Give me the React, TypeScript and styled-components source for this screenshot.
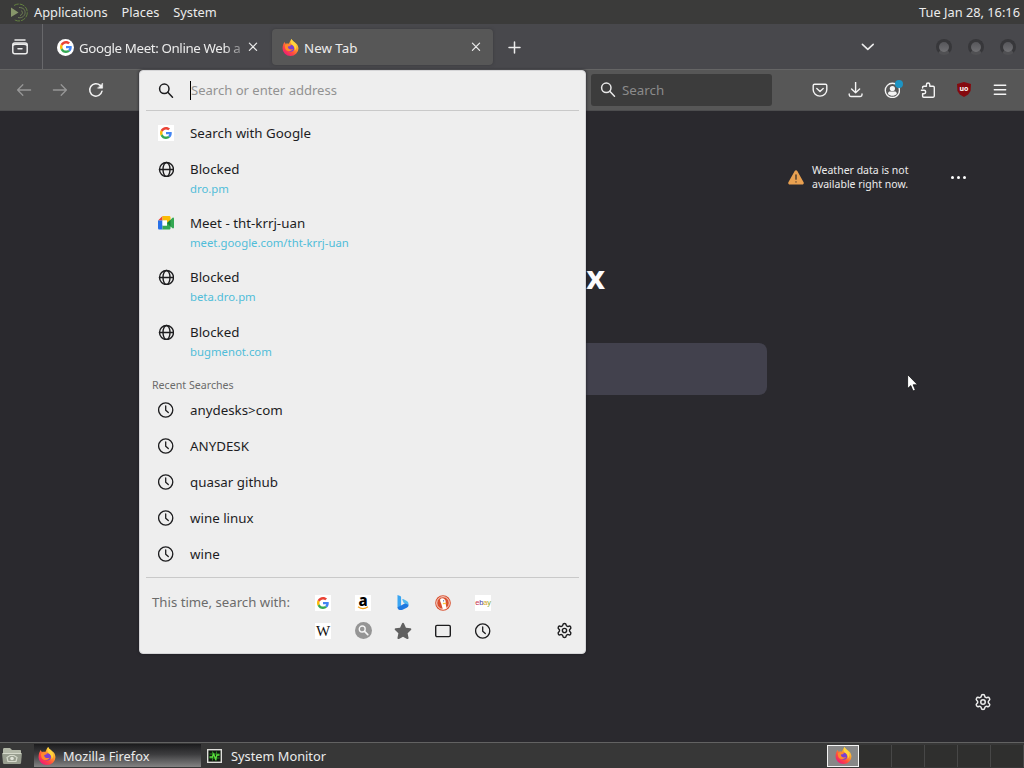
import React, { ReactNode } from "react"
import styled, { createGlobalStyle, css } from "styled-components"
import { Settings } from "lucide-react"

type IconProps = {
  size?: number
}

type TabProps = {
  $active?: boolean
  $width: number
}

type ResultProps = {
  icon: ReactNode
  title: string
  url?: string
}

const GlobalStyle = createGlobalStyle`
  * {
    box-sizing: border-box;
  }

  body {
    margin: 0;
    overflow: hidden;
    background: #2a292e;
    font-family: "Noto Sans", "Open Sans", sans-serif;
    font-size: 13.33px;
    line-height: 18px;
  }

  svg {
    display: block;
    flex: none;
  }
`

/* ---------- icons ---------- */

const Stroke = styled.svg.attrs<{ $w?: number }>({
  viewBox: "0 0 16 16",
  fill: "none",
  stroke: "currentColor",
  strokeLinecap: "round",
  strokeLinejoin: "round",
})`
  width: 16px;
  height: 16px;
  stroke-width: ${(props) => props.$w || 1.3};
`

const SearchIcon = () => (
  <Stroke $w={1.5}>
    <circle cx="6.3" cy="5.8" r="4.7" />
    <path d="M9.8 9.3l4.7 4.9" />
  </Stroke>
)

const GlobeIcon = () => (
  <Stroke $w={1.4}>
    <circle cx="8.5" cy="8.5" r="7" />
    <ellipse cx="8.5" cy="8.5" rx="3.5" ry="7" />
    <path d="M1.5 8.5h14" />
  </Stroke>
)

const ClockIcon = () => (
  <Stroke>
    <circle cx="7.7" cy="8" r="7.1" />
    <path d="M7.7 4v4.2l2.6 2.4" />
  </Stroke>
)

const ViewIcon = () => (
  <Stroke $w={1.5}>
    <path d="M3 1h10" />
    <rect x="0.8" y="4" width="14.4" height="10.8" rx="2" />
    <path d="M1 6.2C2 5.4 3 5.2 4 5.2h8c1 0 2 .2 3 1M6 9.7h4" />
  </Stroke>
)

const CloseIcon = () => (
  <Stroke $w={1.2}>
    <path d="M4.4 4.2l7.2 7.2M11.6 4.2l-7.2 7.2" />
  </Stroke>
)

const PlusIcon = () => (
  <Stroke $w={1.5}>
    <path d="M7.5 3v11M2 8.500h11" />
  </Stroke>
)

const ChevronIcon = () => (
  <Stroke $w={1.6}>
    <path d="M3.4 5.4l5.400 5 5.400-5" />
  </Stroke>
)

const BackIcon = () => (
  <Stroke>
    <path d="M14.6 8H1.6M6.8 2.8L1.6 8l5.2 5.2" />
  </Stroke>
)

const ForwardIcon = () => (
  <Stroke>
    <path d="M1.4 8h13M9.2 2.8L14.4 8l-5.2 5.2" />
  </Stroke>
)

const ReloadIcon = () => (
  <Stroke $w={1.5}>
    <path d="M14 9.2A6.2 6.2 0 1 1 12.2 3.4" />
    <path d="M14.6 1.4v4.8H9.8z" fill="currentColor" strokeWidth="0.6" />
  </Stroke>
)

const PocketIcon = () => (
  <Stroke $w={1.4}>
    <path d="M2.6 2.2h10.8c.9 0 1.4.5 1.4 1.4v4.2a6.8 6.3 0 0 1-13.6 0V3.6c0-.9.5-1.4 1.4-1.4z" />
    <path d="M4.8 6.4L8 9.4l3.2-3" />
  </Stroke>
)

const DownloadIcon = () => (
  <Stroke $w={1.4}>
    <path d="M7.600 .3v10.400M3.600 7L7.600 10.800l4-3.800M1.200 11.900v.9c0 1.100.6 1.700 1.700 1.700h9.400c1.100 0 1.700-.6 1.700-1.700v-.9" />
  </Stroke>
)

const AccountIcon = () => (
  <Stroke $w={1.4}>
    <circle cx="8.400" cy="8.400" r="7.100" />
    <circle cx="8.400" cy="6.500" r="2.600" fill="currentColor" stroke="none" />
    <path d="M4 12c0-1.800 1-2.400 2.200-2.400h4.400c1.200 0 2.200.6 2.200 2.400-2.400 2.400-6.400 2.400-8.800 0z" fill="currentColor" stroke="none" />
  </Stroke>
)

const PuzzleIcon = () => (
  <Stroke $w={1.4}>
    <path d="M2.600 6V5.400c0-.7.400-1.100 1.100-1.100h2.700V2.700a1.700 1.700 0 0 1 3.400 0v1.600h3.400c.7 0 1.100.4 1.100 1.100v8.700c0 .7-.4 1.100-1.100 1.100H3.700c-.7 0-1.100-.4-1.100-1.100v-2.400h1.400a1.700 1.700 0 0 0 0-3.400H1.400" />
  </Stroke>
)

const MenuIcon = () => (
  <Stroke $w={1.4}>
    <path d="M2.300 3.200h11.400M2.300 7.700h11.400M2.300 12.200h11.400" />
  </Stroke>
)

const WindowIcon = () => (
  <Stroke $w={1.4}>
    <rect x="0.7" y="2.400" width="14.600" height="11.200" rx="1.300" />
  </Stroke>
)

const StarIcon = () => (
  <svg width="18" height="18" viewBox="0 0 16 16" fill="#606060">
    <path d="M8 .6c.4 0 .7.3.9.7l1.7 3.7 4 .5c.8.1 1.1 1 .5 1.6l-3 2.8.8 4.1c.2.8-.6 1.4-1.3 1L8 13l-3.6 2c-.7.4-1.5-.2-1.3-1l.8-4.1-3-2.8C.3 6.500.6 5.600 1.400 5.500l4-.5L7.100 1.300c.2-.4.5-.7.9-.7z" />
  </svg>
)

const GoogleIcon = ({ size = 12 }: IconProps) => (
  <svg width={size} height={size} viewBox="0 0 48 48">
    <path fill="#EA4335" d="M24 9.500c3.540 0 6.710 1.220 9.210 3.600l6.850-6.850C35.900 2.380 30.470 0 24 0 14.620 0 6.510 5.380 2.560 13.220l7.980 6.190C12.430 13.720 17.740 9.500 24 9.500z" />
    <path fill="#4285F4" d="M46.980 24.550c0-1.570-.15-3.090-.38-4.550H24v9.020h12.940c-.58 2.960-2.260 5.480-4.780 7.180l7.730 6c4.510-4.180 7.090-10.360 7.090-17.650z" />
    <path fill="#FBBC05" d="M10.530 28.590c-.48-1.450-.76-2.990-.76-4.590s.27-3.140.76-4.590l-7.980-6.190C.92 16.460 0 20.120 0 24c0 3.880.92 7.540 2.560 10.780l7.970-6.190z" />
    <path fill="#34A853" d="M24 48c6.480 0 11.930-2.130 15.890-5.810l-7.730-6c-2.150 1.450-4.920 2.300-8.160 2.300-6.260 0-11.570-4.220-13.470-9.910l-7.980 6.190C6.510 42.620 14.620 48 24 48z" />
  </svg>
)

const FirefoxIcon = ({ size = 17 }: IconProps) => (
  <svg width={size} height={size} viewBox="0 0 32 32">
    <defs>
      <linearGradient id="fx-body" x1="0.85" y1="0.1" x2="0.2" y2="0.95">
        <stop offset="0" stopColor="#ffe04a" />
        <stop offset="0.35" stopColor="#ff9a2a" />
        <stop offset="0.65" stopColor="#ff4f3d" />
        <stop offset="1" stopColor="#f01878" />
      </linearGradient>
    </defs>
    <path
      fill="url(#fx-body)"
      d="M18 0c1 4 6 5 9 9 2 1 4 6 4 9a15 14 0 0 1-30 0C1 12 3 8 5 5c0 2 1 3 2 4 2-1 4-1 6 0 2-4 3-7 5-9z"
    />
    <circle cx="16.500" cy="17.500" r="6.500" fill="#7b3fd0" />
    <path fill="#ff8a2b" d="M5 12c4-3 9-2 12 0-2 1-4 2-6 2 0 5 5 7 10 5-4 6-13 5-15-1z" />
    <path fill="#ffd43c" d="M18 0c1 4 6 5 8 10 2 4 1 9-2 12 1-6-2-9-5-11-3-3-3-8-1-11z" />
  </svg>
)

const MeetIcon = () => (
  <svg width="16" height="14" viewBox="0 0 16 14">
    <path fill="#ea4335" d="M0 4.500L4.500 0v4.500z" />
    <path fill="#fbbc04" d="M4.500 0H11c1 0 1.500.5 1.500 1.500V5L9 7V4.500H4.500z" />
    <path fill="#2670e8" d="M0 4.500h4.500v9H1.500C.5 13.500 0 13 0 12z" />
    <path fill="#34a853" d="M4.500 9.500H9V7l5.600-5.200c.6-.4 1.400-.1 1.400.6v9.200c0 .7-.8 1-1.400.6L12.500 10.500V12c0 1-.5 1.500-1.500 1.500H4.500z" />
    <path fill="#188038" d="M9 7l3.500-3v6.500z" />
    <path fill="#ffffff" d="M4.500 4.500H9v5H4.500z" />
  </svg>
)

const BingIcon = () => (
  <svg width="12" height="15" viewBox="0 0 12 15">
    <path fill="#3aa5f2" d="M.5 0l2.700 1c.6.2.9.6.9 1.200v9L.5 12.800z" />
    <path fill="#1f78e0" d="M.5 12.200l3.600-1.700L8.500 8l3 1.500c.2 1.600-.6 2.600-1.800 3.300L5 15c-2.500.6-4.500-.8-4.500-2.800z" />
    <path fill="#52b9f0" d="M5.200 4.600c0-.5.400-.7.900-.5l3.300 1.600c1.600.8 2.300 2.100 2.100 4.100L6.600 7.800z" />
  </svg>
)

const DuckIcon = () => (
  <svg width="16" height="16" viewBox="0 0 16 16">
    <circle cx="8" cy="8" r="7.800" fill="#d9502f" />
    <circle cx="8" cy="8" r="6.300" fill="none" stroke="#ffffff" strokeWidth="0.8" />
    <path fill="#ffffff" d="M5.200 4.200C6 3 8.500 3 9.800 4.400c1 1 1 2.600.8 4l1 5.200c-1.200.6-2.600.8-3.800.6L6.200 8.400C5.400 7 4.900 5.200 5.200 4.200z" />
    <path fill="#f8c33a" d="M7.800 7.800l3.600.3-.4 1-3 .2z" />
    <circle cx="8.600" cy="5.800" r="0.600" fill="#2d4f8e" />
  </svg>
)

const GreySearchIcon = () => (
  <svg width="17" height="17" viewBox="0 0 16 16" fill="none" stroke="#f4f4f4" strokeLinecap="round">
    <circle cx="8" cy="8" r="8" fill="#959595" stroke="none" />
    <circle cx="6.800" cy="6.600" r="2.800" strokeWidth="1.300" />
    <path d="M9 8.900l3 3" strokeWidth="1.600" />
  </svg>
)

const WarningIcon = () => (
  <svg width="16" height="15" viewBox="0 0 16 15">
    <path fill="#e9a050" d="M6.700.9c.6-1 2-1 2.600 0l6.300 11.400c.6 1-.1 2.300-1.300 2.300H1.700c-1.200 0-1.900-1.300-1.300-2.300z" />
    <path stroke="#39302a" strokeWidth="1.300" strokeLinecap="round" d="M8 4.800v4.400M8 11.800v.1" />
  </svg>
)

const MateIcon = () => (
  <svg width="19" height="19" viewBox="0 0 19 19" fill="none">
    <path fill="#87966a" d="M1 4.500l7.500 5L1 14z" />
    <path stroke="#62803f" d="M4 2.500a8.500 8.500 0 1 1 0 14" strokeDasharray="5 1" />
    <path stroke="#6e7f55" d="M9 4.500c5 0 6.500 3 6 6s-4 5-7 4M11 7.500c2 1 2 4-1 5" />
  </svg>
)

const FilesIcon = () => (
  <svg width="20" height="18" viewBox="0 0 20 18">
    <path fill="#b3b8a8" d="M1 2.500C1 1.500 1.500 1 2.500 1H8l2 2h8c.7 0 1 .3 1 1v2H1z" />
    <path fill="#989e8f" d="M0 6h20l-1 10c-.1.700-.5 1-1 1H2c-.5 0-.9-.3-1-1z" />
    <path fill="none" stroke="#d5d9cb" strokeWidth="1.200" d="M1 6.500h18M6 14.500l-1-4 3-2h4l3 2-1 4z" />
    <circle cx="10" cy="11.500" r="1.800" fill="#e0e3d8" />
  </svg>
)

const MonitorIcon = () => (
  <svg width="15" height="14" viewBox="0 0 15 14">
    <rect x="0.700" y="0.700" width="13.600" height="12.600" fill="#101810" stroke="#e0e0dc" strokeWidth="1.400" />
    <path d="M2.500 5h10M2.500 9h10M5.500 2.500v9M9.500 2.500v9" stroke="#2a8a22" strokeWidth="1" />
    <path d="M2.500 8h3l1.200-3 1.800 5 1.500-4h2.500" stroke="#5be03d" strokeWidth="1.300" fill="none" />
  </svg>
)

const PointerIcon = () => (
  <svg width="12" height="18" viewBox="0 0 12 18">
    <path
      fill="#ffffff"
      stroke="#111114"
      strokeWidth="0.800"
      d="M.6.600v14l3.200-3 2.200 5.400 2.400-1-2.300-5.200h4.500z"
    />
  </svg>
)

/* ---------- desktop ---------- */

const Desktop = styled.div`
  position: relative;
  display: flex;
  flex-direction: column;
  width: 1024px;
  height: 768px;
  overflow: hidden;
  color: #ececec;
`

const TopPanel = styled.header`
  display: flex;
  align-items: center;
  gap: 14px;
  height: 24px;
  padding: 0 4px 0 10px;
  background: #3b3b3a;
  font-size: 12.8px;
  white-space: nowrap;
`

const MenuEntry = styled.span`
  display: flex;
  align-items: center;
  gap: 5px;
`

const Clock = styled.time`
  margin-left: auto;
`

const BottomPanel = styled.footer`
  display: flex;
  align-items: center;
  height: 26px;
  border-top: 1px solid #626262;
  background: #373737;
  font-size: 12.8px;
`

const Launcher = styled.div`
  width: 34px;
  padding-left: 2px;
`

const Task = styled.div<{ $active?: boolean }>`
  display: flex;
  align-items: center;
  gap: ${(props) => (props.$active ? 7 : 9)}px;
  width: 167px;
  height: 23px;
  margin-right: 2px;
  padding-left: 4px;
  ${(props) =>
    props.$active &&
    css`
      background: linear-gradient(#1b1b1d, #3d3d3f 45%, #838383);
    `}
`

const Pager = styled.div`
  display: flex;
  height: 22px;
  margin-left: auto;
`

const Workspace = styled.div<{ $active?: boolean }>`
  display: flex;
  align-items: center;
  justify-content: center;
  width: 33px;
  border-right: 1px solid #474747;
  background: #2f2f2e;
  ${(props) =>
    props.$active &&
    css`
      width: 32px;
      border: 1.5px solid #f4f4f4;
      background: #878787;
    `}
`

/* ---------- browser chrome ---------- */

const TabStrip = styled.div`
  display: flex;
  align-items: center;
  height: 45px;
  background: #48484c;
`

const ViewButton = styled.div`
  display: flex;
  align-items: center;
  justify-content: center;
  width: 43px;
  height: 100%;
  padding-right: 3px;
  border-right: 1px solid #68686b;
`

const Tab = styled.div<TabProps>`
  display: flex;
  align-items: center;
  width: ${(props) => props.$width}px;
  height: 36px;
  padding: 1px 13px 0 14px;
  gap: 5px;
  border-radius: 4px;
  ${(props) =>
    props.$active &&
    css`
      padding: 1px 9px 0 10px;
      background: #575757;
      box-shadow: 0 0 3px #39393c;
    `}
`

const TabLabel = styled.span<{ $fade?: boolean }>`
  flex: 1;
  padding-top: 1px;
  white-space: nowrap;
  ${(props) =>
    props.$fade &&
    css`
      letter-spacing: -0.38px;
      mask-image: linear-gradient(to right, #000 90%, #0006);
    `}
`

const Favicon = styled.span<{ $round?: boolean }>`
  display: flex;
  align-items: center;
  justify-content: center;
  width: 17px;
  height: 17px;
  flex: none;
  ${(props) =>
    props.$round &&
    css`
      border-radius: 50%;
      background: #ffffff;
    `}
`

const NewTab = styled.div`
  margin-left: 14px;
`

const WindowControls = styled.div`
  display: flex;
  align-items: center;
  gap: 16px;
  margin-left: auto;
  padding-right: 8px;
`

const ListTabs = styled.div`
  margin-right: 45px;
`

const Orb = styled.i`
  width: 16px;
  height: 16px;
  border: 3px solid #37373a;
  border-bottom-color: #505053;
  border-radius: 50%;
  background: linear-gradient(#56565a, #707073);
`

const Toolbar = styled.div`
  display: flex;
  align-items: center;
  height: 42px;
  padding: 0 16px;
  border-top: 1px solid #656565;
  border-bottom: 1px solid #4d4d4f;
  background: #575757;
`

const NavButtons = styled.div`
  display: flex;
  gap: 20px;
`

const NavButton = styled.span<{ $disabled?: boolean }>`
  color: ${(props) => (props.$disabled ? "#979797" : "#f2f2f2")};
`

const SearchBar = styled.div`
  display: flex;
  align-items: center;
  gap: 6px;
  width: 181px;
  height: 32px;
  margin-left: 487px;
  padding-left: 9px;
  border-radius: 3px;
  background: #3c3c3c;
  color: #8b8b8b;

  svg {
    color: #e8e8e8;
  }
`

const ToolbarActions = styled.div`
  display: flex;
  gap: 20px;
  margin-left: auto;
  color: #f4f4f4;
`

const Account = styled.span`
  position: relative;
`

const AccountBadge = styled.i`
  position: absolute;
  top: -2px;
  right: -3px;
  width: 8px;
  height: 8px;
  border-radius: 50%;
  background: #1c94c4;
`

const Shield = styled.span`
  display: flex;
  align-items: center;
  justify-content: center;
  width: 14px;
  height: 15px;
  margin: 0 1px;
  padding-bottom: 1px;
  background: #850a0f;
  clip-path: polygon(50% 0, 100% 14%, 97% 60%, 80% 84%, 50% 100%, 20% 84%, 3% 60%, 0 14%);
  color: #ffffff;
  font-size: 7px;
  font-weight: 700;
  line-height: 8px;
`

/* ---------- new tab page ---------- */

const Page = styled.main`
  display: flex;
  flex: 1;
  flex-direction: column;
  background: #2a292e;
`

const Weather = styled.div`
  display: flex;
  align-items: center;
  align-self: flex-end;
  width: 236px;
  height: 28px;
  margin-top: 52px;
  gap: 8px;
  font-size: 10.5px;
  line-height: 14px;
`

const WeatherText = styled.span`
  width: 104px;
`

const Dots = styled.span`
  display: flex;
  gap: 3px;
  margin-left: 27px;

  i {
    width: 3px;
    height: 3px;
    border-radius: 50%;
    background: #ffffff;
  }
`

const Wordmark = styled.h1`
  align-self: center;
  width: 186px;
  margin: 64px 0 0;
  color: #fbfbfe;
  font-size: 33px;
  font-weight: 700;
  line-height: 44px;
  text-align: right;
`

const PageSearch = styled.div`
  align-self: center;
  width: 510px;
  height: 52px;
  margin-top: 44px;
  border-radius: 8px;
  background: #42414d;
`

const PageFooter = styled.div`
  display: flex;
  justify-content: flex-end;
  margin-top: auto;
  padding: 0 32px 31px;
`

const Pointer = styled.div`
  position: absolute;
  top: 374px;
  left: 907px;
`

/* ---------- address bar popup ---------- */

const Popup = styled.section`
  position: absolute;
  top: 70px;
  left: 139px;
  display: flex;
  flex-direction: column;
  width: 447px;
  height: 584px;
  padding: 0 6px;
  border: 1px solid #d5d5d7;
  border-radius: 4px;
  background: #eeeeee;
  color: #1d1d1f;
  box-shadow: 0 0 3px #1c1b22;
`

const AddressRow = styled.div`
  display: flex;
  align-items: center;
  gap: 16px;
  height: 40px;
  padding-left: 12px;
  border-bottom: 1px solid #c9c9c9;
`

const AddressInput = styled.span`
  height: 19px;
  border-left: 1px solid #000000;
  color: #929292;
  font-size: 13.05px;
`

const Results = styled.ul`
  margin: 0;
  padding: 0;
  list-style: none;
`

const ResultRow = styled.li<{ $tall: boolean }>`
  display: flex;
  gap: 16px;
  height: ${(props) => (props.$tall ? 54.2 : 36)}px;
  padding: 9px 0 0 12px;
`

const ResultIcon = styled.span`
  display: flex;
  align-items: center;
  justify-content: center;
  width: 16px;
  height: 18px;
`

const ResultUrl = styled.div`
  margin-top: 3px;
  color: #50bdd9;
  font-size: 11.33px;
  line-height: 15px;
`

const GroupLabel = styled.h2`
  height: 24px;
  margin: 0;
  padding: 10px 6px 0;
  color: #6b6b6b;
  font-size: 10.65px;
  font-weight: 400;
  line-height: 15px;
`

const OneOffs = styled.div`
  display: flex;
  margin-top: 5px;
  padding: 11px 6px 0;
  border-top: 1px solid #c9c9c9;
`

const OneOffLabel = styled.span`
  width: 151px;
  padding-top: 4px;
  color: #6b6b6b;
  font-size: 13.2px;
`

const EngineGrid = styled.div`
  display: grid;
  grid-template-columns: repeat(5, 40px);
  grid-auto-rows: 28px;
`

const Engine = styled.span`
  display: flex;
  align-items: center;
  justify-content: center;
`

const EngineTile = styled.span`
  display: flex;
  align-items: center;
  justify-content: center;
  width: 16px;
  height: 16px;
  background: #ffffff;
`

const Amazon = styled(EngineTile)`
  flex-direction: column;
  color: #000000;
  font-size: 15px;
  font-weight: 800;
  line-height: 11px;
`

const Ebay = styled(EngineTile)`
  color: #86a81c;
  font-family: "Liberation Sans", Arial, sans-serif;
  font-size: 7.5px;
  letter-spacing: -0.2px;
`

const EbayPart = styled.span<{ $color: string }>`
  color: ${(props) => props.$color};
`

const Wiki = styled(EngineTile)`
  color: #111111;
  font-family: "Liberation Serif", serif;
  font-size: 15px;
`

const PopupSettings = styled.span`
  align-self: flex-end;
  margin: 0 0 6px auto;
`

const Result: React.FC<ResultProps> = ({ icon, title, url }) => (
  <ResultRow $tall={!!url}>
    <ResultIcon>{icon}</ResultIcon>
    <div>
      {title}
      {url && <ResultUrl>{url}</ResultUrl>}
    </div>
  </ResultRow>
)

const googleTile = (
  <EngineTile>
    <GoogleIcon />
  </EngineTile>
)

const pages: ResultProps[] = [
  { icon: <GlobeIcon />, title: "Blocked", url: "dro.pm" },
  { icon: <MeetIcon />, title: "Meet - tht-krrj-uan", url: "meet.google.com/tht-krrj-uan" },
  { icon: <GlobeIcon />, title: "Blocked", url: "beta.dro.pm" },
  { icon: <GlobeIcon />, title: "Blocked", url: "bugmenot.com" },
]

const searches = ["anydesks>com", "ANYDESK", "quasar github", "wine linux", "wine"]

const AmazonTile = () => (
  <Amazon>
    a
    <svg width="12" height="4" viewBox="0 0 12 4" fill="none" stroke="#f3a21b">
      <path d="M1 .8c3 2.200 7 2.200 10 0" strokeWidth="1.200" />
    </svg>
  </Amazon>
)

const EbayTile = () => (
  <Ebay>
    <span>
      <EbayPart $color="#c8344c">e</EbayPart>
      <EbayPart $color="#4a3a9c">b</EbayPart>
      <EbayPart $color="#d9a520">a</EbayPart>y
    </span>
  </Ebay>
)

const engines: { name: string; icon: ReactNode }[] = [
  { name: "google", icon: googleTile },
  { name: "amazon", icon: <AmazonTile /> },
  { name: "bing", icon: <BingIcon /> },
  { name: "duckduckgo", icon: <DuckIcon /> },
  { name: "ebay", icon: <EbayTile /> },
  { name: "wikipedia", icon: <Wiki>W</Wiki> },
  { name: "other", icon: <GreySearchIcon /> },
  { name: "bookmarks", icon: <StarIcon /> },
  { name: "tabs", icon: <WindowIcon /> },
  { name: "history", icon: <ClockIcon /> },
]

const AddressPopup = () => (
  <Popup>
    <AddressRow>
      <SearchIcon />
      <AddressInput>Search or enter address</AddressInput>
    </AddressRow>
    <Results style={{ paddingTop: 4 }}>
      <Result icon={googleTile} title="Search with Google" />
      {pages.map((page) => (
        <Result key={page.url} {...page} />
      ))}
    </Results>
    <GroupLabel>Recent Searches</GroupLabel>
    <Results>
      {searches.map((term) => (
        <Result key={term} icon={<ClockIcon />} title={term} />
      ))}
    </Results>
    <OneOffs>
      <OneOffLabel>This time, search with:</OneOffLabel>
      <EngineGrid>
        {engines.map(({ name, icon }) => (
          <Engine key={name}>{icon}</Engine>
        ))}
      </EngineGrid>
      <PopupSettings>
        <Settings size={17} strokeWidth={2} />
      </PopupSettings>
    </OneOffs>
  </Popup>
)

const App: React.FC = () => (
  <Desktop>
    <GlobalStyle />
    <TopPanel>
      <MenuEntry>
        <MateIcon />
        Applications
      </MenuEntry>
      <MenuEntry>Places</MenuEntry>
      <MenuEntry>System</MenuEntry>
      <Clock>Tue Jan 28, 16:16</Clock>
    </TopPanel>

    <TabStrip>
      <ViewButton>
        <ViewIcon />
      </ViewButton>
      <Tab $width={229}>
        <Favicon $round>
          <GoogleIcon />
        </Favicon>
        <TabLabel $fade>Google Meet: Online Web a</TabLabel>
        <CloseIcon />
      </Tab>
      <Tab $width={221} $active>
        <Favicon>
          <FirefoxIcon />
        </Favicon>
        <TabLabel>New Tab</TabLabel>
        <CloseIcon />
      </Tab>
      <NewTab>
        <PlusIcon />
      </NewTab>
      <WindowControls>
        <ListTabs>
          <ChevronIcon />
        </ListTabs>
        <Orb />
        <Orb />
        <Orb />
      </WindowControls>
    </TabStrip>

    <Toolbar>
      <NavButtons>
        <NavButton $disabled>
          <BackIcon />
        </NavButton>
        <NavButton $disabled>
          <ForwardIcon />
        </NavButton>
        <NavButton>
          <ReloadIcon />
        </NavButton>
      </NavButtons>
      <SearchBar>
        <SearchIcon />
        Search
      </SearchBar>
      <ToolbarActions>
        <PocketIcon />
        <DownloadIcon />
        <Account>
          <AccountIcon />
          <AccountBadge />
        </Account>
        <PuzzleIcon />
        <Shield>uo</Shield>
        <MenuIcon />
      </ToolbarActions>
    </Toolbar>

    <Page>
      <Weather>
        <WarningIcon />
        <WeatherText>Weather data is not available right now.</WeatherText>
        <Dots>
          <i />
          <i />
          <i />
        </Dots>
      </Weather>
      <Wordmark>Firefox</Wordmark>
      <PageSearch />
      <PageFooter>
        <Settings size={18} strokeWidth={2} />
      </PageFooter>
    </Page>

    <BottomPanel>
      <Launcher>
        <FilesIcon />
      </Launcher>
      <Task $active>
        <FirefoxIcon size={18} />
        Mozilla Firefox
      </Task>
      <Task>
        <MonitorIcon />
        System Monitor
      </Task>
      <Pager>
        <Workspace $active>
          <FirefoxIcon />
        </Workspace>
        <Workspace />
        <Workspace />
        <Workspace />
        <Workspace />
        <Workspace />
      </Pager>
    </BottomPanel>

    <AddressPopup />
    <Pointer>
      <PointerIcon />
    </Pointer>
  </Desktop>
)

export default App
